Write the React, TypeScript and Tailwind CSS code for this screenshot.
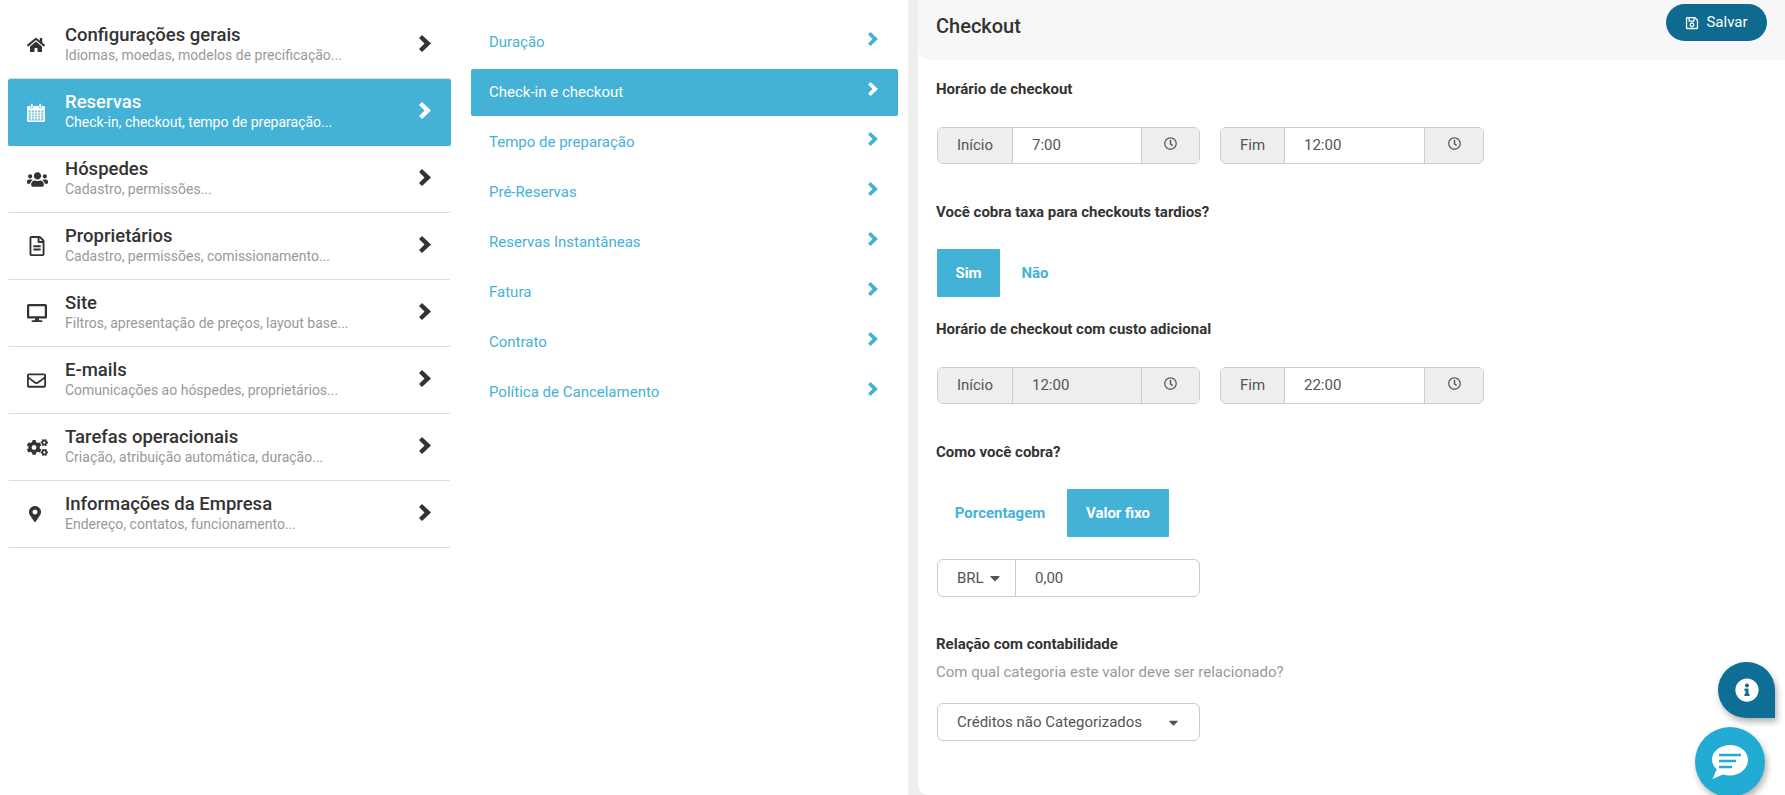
import type { ReactNode } from "react";
import {
  FaCaretDown,
  FaCogs,
  FaDesktop,
  FaHome,
  FaInfoCircle,
  FaMapMarkerAlt,
  FaRegClock,
  FaRegEnvelope,
  FaRegFileAlt,
  FaRegSave,
  FaUsers,
} from "react-icons/fa";

function CalendarIcon() {
  return (
    <svg width="18" height="19" viewBox="0 0 18 19" fill="none">
      <path d="M1.5 3h15a1.5 1.5 0 0 1 1.5 1.5V17.5a1.5 1.5 0 0 1-1.5 1.5h-15A1.5 1.5 0 0 1 0 17.5V4.5A1.5 1.5 0 0 1 1.5 3z" fill="currentColor" />
      <path d="M1.5 7.5h15v10h-15z" fill="#7cc8e2" />
      <path d="M1.5 9.8h15M1.5 12.3h15M1.5 14.8h15M4.5 7.5v10M7.5 7.5v10M10.5 7.5v10M13.5 7.5v10" stroke="currentColor" strokeWidth="0.9" />
      <rect x="3.5" y="0.5" width="2.5" height="4.5" rx="1" fill="currentColor" stroke="#44b2d6" strokeWidth="0.6" />
      <rect x="12" y="0.5" width="2.5" height="4.5" rx="1" fill="currentColor" stroke="#44b2d6" strokeWidth="0.6" />
    </svg>
  );
}

function Chevron({ className }: { className: string }) {
  return (
    <svg viewBox="0 0 12 17" fill="currentColor" className={className}>
      <polygon points="3,0 12,8.5 3,17 0,14 5.5,8.5 0,3" />
    </svg>
  );
}

const sections: { title: string; sub: string; icon: ReactNode; active?: boolean }[] = [
  { title: "Configurações gerais", sub: "Idiomas, moedas, modelos de precificação...", icon: <FaHome size={18} /> },
  { title: "Reservas", sub: "Check-in, checkout, tempo de preparação...", icon: <CalendarIcon />, active: true },
  { title: "Hóspedes", sub: "Cadastro, permissões...", icon: <FaUsers size={21} /> },
  { title: "Proprietários", sub: "Cadastro, permissões, comissionamento...", icon: <FaRegFileAlt size={20} /> },
  { title: "Site", sub: "Filtros, apresentação de preços, layout base...", icon: <FaDesktop size={20} /> },
  { title: "E-mails", sub: "Comunicações ao hóspedes, proprietários...", icon: <FaRegEnvelope size={19} /> },
  { title: "Tarefas operacionais", sub: "Criação, atribuição automática, duração...", icon: <FaCogs size={21} /> },
  { title: "Informações da Empresa", sub: "Endereço, contatos, funcionamento...", icon: <FaMapMarkerAlt size={16} /> },
];

const subItems = [
  "Duração",
  "Check-in e checkout",
  "Tempo de preparação",
  "Pré-Reservas",
  "Reservas Instantâneas",
  "Fatura",
  "Contrato",
  "Política de Cancelamento",
];

function SectionRow({ title, sub, icon, active }: (typeof sections)[number]) {
  return (
    <div
      className={`flex h-[67px] items-center rounded-[2px] border-b ${
        active ? "border-[#44b2d6] bg-[#44b2d6] text-white" : "border-[#ddd] text-[#333]"
      }`}
    >
      <div className="flex w-[57px] shrink-0 pl-[19px]">{icon}</div>
      <div className="min-w-0 flex-1 pb-[3px]">
        <div className="text-[18.5px] leading-[22px] font-medium">{title}</div>
        <div className={`text-[14px] leading-[18px] ${active ? "text-white" : "text-[#999]"}`}>{sub}</div>
      </div>
      <Chevron className="mr-[20px] mb-[4px] h-[17px] w-[12px] shrink-0" />
    </div>
  );
}

function TimeGroup({ label, value, labelWidth, inputWidth, disabled }: {
  label: string;
  value: string;
  labelWidth: string;
  inputWidth: string;
  disabled?: boolean;
}) {
  return (
    <div className="flex h-[37px] overflow-hidden rounded-[6px] border border-[#ccc] text-[15px] text-[#555]">
      <div className={`flex items-center justify-center bg-[#eee] ${labelWidth}`}>{label}</div>
      <div className={`flex items-center border-x border-[#ccc] pl-[19px] ${inputWidth} ${disabled ? "bg-[#eee]" : "bg-white"}`}>
        {value}
      </div>
      <div className="flex flex-1 items-center justify-center bg-[#eee] pb-[4px]">
        <FaRegClock size={13} />
      </div>
    </div>
  );
}

function Label({ children, className }: { children: ReactNode; className: string }) {
  return <div className={`text-[15px] leading-[20px] font-bold text-[#333] ${className}`}>{children}</div>;
}

function Choice({ children, active, width }: { children: ReactNode; active?: boolean; width: string }) {
  return (
    <div
      className={`flex h-[48px] items-center justify-center rounded-[1px] text-[15px] font-bold ${width} ${
        active ? "bg-[#44b2d6] text-white" : "text-[#44b2d6]"
      }`}
    >
      {children}
    </div>
  );
}

export default function App() {
  return (
    <div className="relative flex h-[795px] w-[1785px] overflow-hidden bg-white font-['Roboto',sans-serif]">
      <div className="w-[908px] shrink-0 pl-[8px]">
        <div className="flex">
          <div className="w-[443px] shrink-0 pt-[12px]">
            {sections.map((section) => (
              <SectionRow key={section.title} {...section} />
            ))}
          </div>
          <div className="ml-[20px] flex w-[427px] shrink-0 flex-col gap-[3px] pt-[19px]">
            {subItems.map((item) => {
              const active = item === "Check-in e checkout";
              return (
                <div
                  key={item}
                  className={`flex h-[47px] items-center justify-between rounded-[2px] pr-[20px] pl-[18px] text-[15px] ${
                    active ? "bg-[#44b2d6] text-white" : "text-[#44b2d6]"
                  }`}
                >
                  <span>{item}</span>
                  <Chevron className="mb-[7px] h-[14px] w-[10px]" />
                </div>
              );
            })}
          </div>
        </div>
      </div>

      <div className="min-w-0 flex-1 bg-[#eee] pl-[10px]">
        <div className="h-full rounded-bl-[10px] bg-white">
          <div className="flex h-[60px] items-start justify-between rounded-bl-[10px] bg-[#f7f7f7] pr-[18px]">
            <div className="pt-[14px] pl-[18px] text-[20px] leading-[24px] font-medium text-[#333]">Checkout</div>
            <button className="mt-[4px] flex h-[37px] w-[101px] items-center justify-center gap-[7px] rounded-full bg-[#0e6a8e] text-[15px] text-white">
              <FaRegSave size={14} />
              Salvar
            </button>
          </div>

          <div className="pl-[19px]">
            <Label className="mt-[19px] -ml-[1px]">Horário de checkout</Label>
            <div className="mt-[28px] flex gap-[20px]">
              <div className="w-[263px]">
                <TimeGroup label="Início" value="7:00" labelWidth="w-[74px]" inputWidth="w-[130px]" />
              </div>
              <div className="w-[264px]">
                <TimeGroup label="Fim" value="12:00" labelWidth="w-[63px]" inputWidth="w-[141px]" />
              </div>
            </div>

            <Label className="mt-[38px] -ml-[1px]">Você cobra taxa para checkouts tardios?</Label>
            <div className="mt-[27px] flex">
              <Choice active width="w-[63px]">Sim</Choice>
              <Choice width="w-[70px]">Não</Choice>
            </div>

            <Label className="mt-[22px] -ml-[1px]">Horário de checkout com custo adicional</Label>
            <div className="mt-[28px] flex gap-[20px]">
              <div className="w-[263px]">
                <TimeGroup label="Início" value="12:00" labelWidth="w-[74px]" inputWidth="w-[130px]" disabled />
              </div>
              <div className="w-[264px]">
                <TimeGroup label="Fim" value="22:00" labelWidth="w-[63px]" inputWidth="w-[141px]" />
              </div>
            </div>

            <Label className="mt-[38px] -ml-[1px]">Como você cobra?</Label>
            <div className="mt-[27px] flex gap-[4px]">
              <Choice width="w-[126px]">Porcentagem</Choice>
              <Choice active width="w-[102px]">Valor fixo</Choice>
            </div>

            <div className="mt-[22px] flex h-[38px] w-[263px] overflow-hidden rounded-[6px] border border-[#ccc] text-[15px] text-[#555]">
              <div className="flex w-[78px] items-center justify-start gap-[3px] border-r border-[#ccc] pl-[19px]">
                BRL
                <FaCaretDown size={16} />
              </div>
              <div className="flex flex-1 items-center pl-[19px]">0,00</div>
            </div>

            <Label className="mt-[37px] -ml-[1px]">Relação com contabilidade</Label>
            <div className="mt-[8px] -ml-[1px] text-[15px] leading-[20px] text-[#999]">
              Com qual categoria este valor deve ser relacionado?
            </div>
            <div className="mt-[21px] flex h-[38px] w-[263px] items-center justify-between rounded-[6px] border border-[#ccc] pr-[18px] pl-[19px] text-[15px] text-[#555]">
              Créditos não Categorizados
              <FaCaretDown size={15} />
            </div>
          </div>
        </div>
      </div>

      <div className="absolute top-[662px] left-[1718px] flex h-[56px] w-[57px] items-center justify-center rounded-t-full rounded-br-[8px] rounded-bl-full bg-[#0e6e95] text-white shadow-[2px_4px_6px_rgba(0,0,0,0.3)]">
        <FaInfoCircle size={24} />
      </div>
      <div className="absolute top-[727px] left-[1695px] flex h-[70px] w-[70px] items-center justify-center rounded-full bg-[#22acd4] shadow-[2px_4px_6px_rgba(0,0,0,0.3)]">
        <svg width="38" height="36" viewBox="0 0 38 36" fill="none">
          <path d="M19 1C9 1 1 7.6 1 15.5c0 3.8 1.8 7.2 4.8 9.8L1.5 35l10.5-4.5c2.2.6 4.5.9 7 .9 10 0 18-7 18-15.5S29 1 19 1z" fill="white" />
          <path d="M8 11h22M8 17h17M8 23h13" stroke="#22acd4" strokeWidth="2.4" />
        </svg>
      </div>
    </div>
  );
}
